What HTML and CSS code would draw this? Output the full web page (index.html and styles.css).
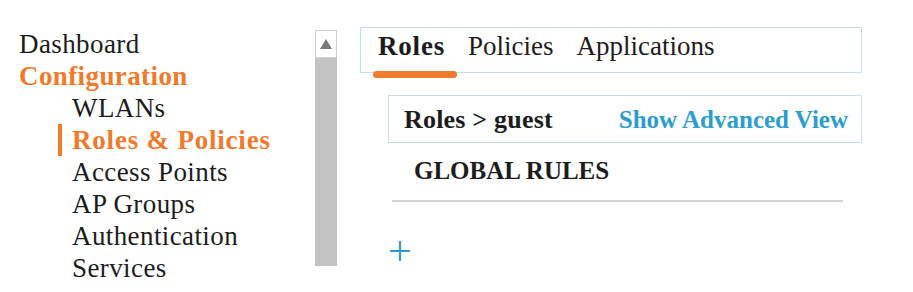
FILE: index.html
```html
<!DOCTYPE html>
<html lang="en">

<head>
    <meta charset="UTF-8">
    <title>Roles &amp; Policies</title>
    <link rel="stylesheet" href="styles.css">
</head>

<body>
    <div class="page">
        <div class="side">
            <ul class="nav">
                <li class="item">Dashboard</li>
                <li class="item group">Configuration</li>
                <li class="item sub">WLANs</li>
                <li class="item sub current">Roles &amp; Policies</li>
                <li class="item sub">Access Points</li>
                <li class="item sub">AP Groups</li>
                <li class="item sub">Authentication</li>
                <li class="item sub">Services</li>
            </ul>
            <div class="scroll">
                <div class="scroll-btn"><span class="arrow"></span></div>
                <div class="scroll-track"></div>
            </div>
        </div>
        <div class="main">
            <ul class="tabs">
                <li class="tab current">Roles</li>
                <li class="tab">Policies</li>
                <li class="tab">Applications</li>
            </ul>
            <div class="crumb">
                <span class="crumb-title">Roles &gt; guest</span>
                <span class="advanced">Show Advanced View</span>
            </div>
            <p class="rules">GLOBAL RULES</p>
            <div class="divider"></div>
            <div class="add">
                <svg width="20" height="20" viewBox="0 0 20 20">
                    <path d="M10 0V20M0 10H20" stroke="#2b9dcf" stroke-width="2.2" fill="none"/>
                </svg>
            </div>
        </div>
    </div>
</body>

</html>
```

FILE: styles.css
```css
html,
body,
ul,
li,
p {
    margin: 0;
    padding: 0;
}

body {
    background: #fff;
    color: #1c1c1c;
    font-family: "Liberation Serif", "Times New Roman", serif;
}

ul {
    list-style-type: none;
}

.page {
    display: flex;
    width: 913px;
    height: 292px;
    overflow: hidden;
}

.side {
    display: flex;
}

.nav {
    width: 296px;
    padding-left: 19px;
    padding-top: 28px;
}

.item {
    font-size: 27px;
    line-height: 32px;
    letter-spacing: 0.4px;
}

.group {
    color: #f07b2c;
    font-weight: bold;
}

.sub {
    padding-left: 53px;
}

.current {
    font-weight: bold;
}

.sub.current {
    margin-left: 39px;
    padding-left: 10px;
    border-left: 4px solid #f07b2c;
    color: #f07b2c;
    letter-spacing: 0.8px;
}

.scroll {
    display: flex;
    flex-direction: column;
    width: 22px;
    height: 236px;
    margin-top: 30px;
}

.scroll-btn {
    display: flex;
    align-items: center;
    justify-content: center;
    height: 26px;
    border: 1px solid #d2d2d2;
    background: #fff;
}

.arrow {
    width: 0;
    height: 0;
    border-left: 6px solid transparent;
    border-right: 6px solid transparent;
    border-bottom: 10px solid #7a7a7a;
}

.scroll-track {
    flex: 1;
    background: #c3c3c3;
}

.main {
    width: 502px;
    margin-left: 23px;
    padding-top: 27px;
}

.tabs {
    display: flex;
    padding-left: 17px;
    padding-top: 3px;
    box-sizing: border-box;
    height: 46px;
    border: 1px solid #c6dee7;
}

.tab {
    position: relative;
    margin-right: 23px;
    font-size: 27px;
    line-height: 30px;
}

.tab.current {
    letter-spacing: 0.8px;
}

.tab.current::after {
    content: "";
    position: absolute;
    left: -5px;
    right: -12px;
    top: 40px;
    height: 7px;
    border-radius: 4px;
    background: #f07b2c;
}

.crumb {
    display: flex;
    justify-content: space-between;
    box-sizing: border-box;
    height: 48px;
    margin-top: 22px;
    margin-left: 28px;
    padding: 9px 13px 0 15px;
    border: 1px solid #c6dee7;
}

.crumb-title {
    font-size: 26px;
    line-height: 30px;
    font-weight: bold;
    letter-spacing: 0.2px;
}

.advanced {
    color: #2b9dcf;
    font-size: 25px;
    line-height: 30px;
    font-weight: bold;
}

.rules {
    margin-top: 13px;
    margin-left: 54px;
    font-size: 25px;
    line-height: 30px;
    font-weight: bold;
}

.divider {
    width: 451px;
    height: 2px;
    margin-top: 14px;
    margin-left: 32px;
    background: #d4d4d4;
}

.add {
    margin-top: 39px;
    margin-left: 30px;
    height: 20px;
}

.add svg {
    display: block;
}
```
